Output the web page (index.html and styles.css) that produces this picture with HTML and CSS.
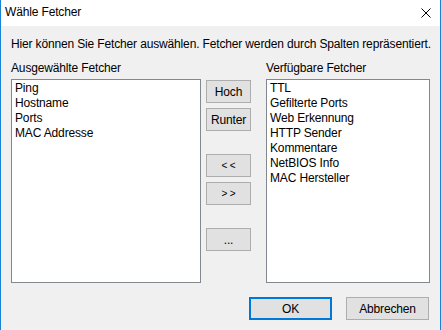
FILE: index.html
```html
<!DOCTYPE html>
<html lang="de">
<head>
    <meta charset="UTF-8">
    <title>Wähle Fetcher</title>
    <link rel="stylesheet" href="styles.css">
</head>
<body>
    <div class="window">
        <div class="titlebar">
            <span class="title">Wähle Fetcher</span>
            <svg class="close" width="10" height="10" viewBox="0 0 10 10">
                <path d="M0.5 0.5 L9.5 9.5 M9.5 0.5 L0.5 9.5" stroke="#000" stroke-width="1" fill="none"/>
            </svg>
        </div>
        <div class="content">
            <div class="info">Hier können Sie Fetcher auswählen. Fetcher werden durch Spalten repräsentiert.</div>
            <div class="main">
                <div class="column left">
                    <div class="label">Ausgewählte Fetcher</div>
                    <ul class="list">
                        <li>Ping</li>
                        <li>Hostname</li>
                        <li>Ports</li>
                        <li>MAC Addresse</li>
                    </ul>
                </div>
                <div class="buttons">
                    <button class="btn">Hoch</button>
                    <button class="btn">Runter</button>
                    <button class="btn spaced arrow">&lt; &lt;</button>
                    <button class="btn arrow">&gt; &gt;</button>
                    <button class="btn spaced">...</button>
                </div>
                <div class="column right">
                    <div class="label">Verfügbare Fetcher</div>
                    <ul class="list">
                        <li>TTL</li>
                        <li>Gefilterte Ports</li>
                        <li>Web Erkennung</li>
                        <li>HTTP Sender</li>
                        <li>Kommentare</li>
                        <li>NetBIOS Info</li>
                        <li>MAC Hersteller</li>
                    </ul>
                </div>
            </div>
            <div class="footer">
                <button class="btn wide default">OK</button>
                <button class="btn wide">Abbrechen</button>
            </div>
        </div>
    </div>
</body>
</html>
```

FILE: styles.css
```css
body {
    margin: 0;
    font-family: "Liberation Sans", Arial, sans-serif;
    font-size: 12px;
    line-height: 15px;
    letter-spacing: -0.15px;
    color: #000;
}
.window {
    width: 441px;
    height: 330px;
    box-sizing: border-box;
    border-left: 1px solid #1883d7;
    border-right: 1px solid #1883d7;
    background-color: #f0f0f0;
    overflow: hidden;
}
.titlebar {
    height: 26px;
    background-color: #fff;
    display: flex;
    align-items: center;
    justify-content: space-between;
    padding: 0 9px 0 4px;
}
.title {
    margin-top: -1px;
}
.close {
    display: block;
}
.content {
    padding: 11px 10px 0 10px;
}
.info {
    height: 15px;
    white-space: nowrap;
}
.main {
    display: flex;
    margin-top: 9px;
}
.column.left {
    width: 190px;
}
.column.right {
    width: 164px;
    margin-left: 15px;
}
.label {
    height: 15px;
    margin-bottom: 3px;
    white-space: nowrap;
}
.list {
    list-style: none;
    margin: 0;
    padding: 1px 3px;
    height: 204px;
    box-sizing: border-box;
    background-color: #fff;
    border: 1px solid #828790;
}
.buttons {
    width: 45px;
    margin-left: 5px;
    padding-top: 19px;
    display: flex;
    flex-direction: column;
    gap: 5px;
}
.btn {
    height: 23px;
    width: 45px;
    padding: 0;
    font-family: inherit;
    font-size: 12px;
    letter-spacing: inherit;
    color: #000;
    background-color: #e1e1e1;
    border: 1px solid #adadad;
    box-sizing: border-box;
}
.btn.spaced {
    margin-top: 18px;
}
.btn.arrow {
    font-size: 10px;
}
.footer {
    display: flex;
    justify-content: flex-end;
    gap: 14px;
    margin-top: 14px;
    padding-right: 1px;
}
.btn.wide {
    width: 83px;
}
.btn.default {
    border: 2px solid #0078d7;
}
```
